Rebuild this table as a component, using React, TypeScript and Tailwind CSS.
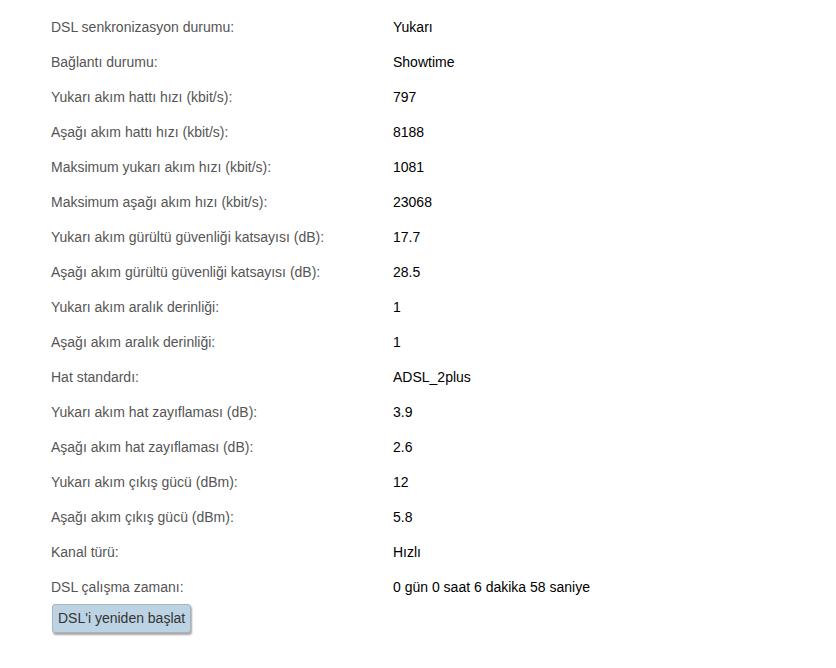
const rows: [string, string][] = [
  ["DSL senkronizasyon durumu:", "Yukarı"],
  ["Bağlantı durumu:", "Showtime"],
  ["Yukarı akım hattı hızı (kbit/s):", "797"],
  ["Aşağı akım hattı hızı (kbit/s):", "8188"],
  ["Maksimum yukarı akım hızı (kbit/s):", "1081"],
  ["Maksimum aşağı akım hızı (kbit/s):", "23068"],
  ["Yukarı akım gürültü güvenliği katsayısı (dB):", "17.7"],
  ["Aşağı akım gürültü güvenliği katsayısı (dB):", "28.5"],
  ["Yukarı akım aralık derinliği:", "1"],
  ["Aşağı akım aralık derinliği:", "1"],
  ["Hat standardı:", "ADSL_2plus"],
  ["Yukarı akım hat zayıflaması (dB):", "3.9"],
  ["Aşağı akım hat zayıflaması (dB):", "2.6"],
  ["Yukarı akım çıkış gücü (dBm):", "12"],
  ["Aşağı akım çıkış gücü (dBm):", "5.8"],
  ["Kanal türü:", "Hızlı"],
  ["DSL çalışma zamanı:", "0 gün 0 saat 6 dakika 58 saniye"],
]

export default function App() {
  return (
    <div className="min-h-[668px] w-[836px] bg-white pt-[10px] pl-[51px] font-['Liberation_Sans',Arial,sans-serif] text-[14px]">
      {rows.map(([label, value]) => (
        <div key={label} className="flex h-[35px] items-center">
          <div className="w-[342px] text-[#555]">{label}</div>
          <div className="text-black">{value}</div>
        </div>
      ))}
      <button className="ml-[1px] mt-[-1px] h-[29px] rounded-[3px] border border-[#a9b4bd] bg-[#bcd3e3] px-[5px] text-[14px] text-[#333] shadow-[1px_2px_2px_rgba(0,0,0,0.35)]">
        DSL'i yeniden başlat
      </button>
    </div>
  )
}
